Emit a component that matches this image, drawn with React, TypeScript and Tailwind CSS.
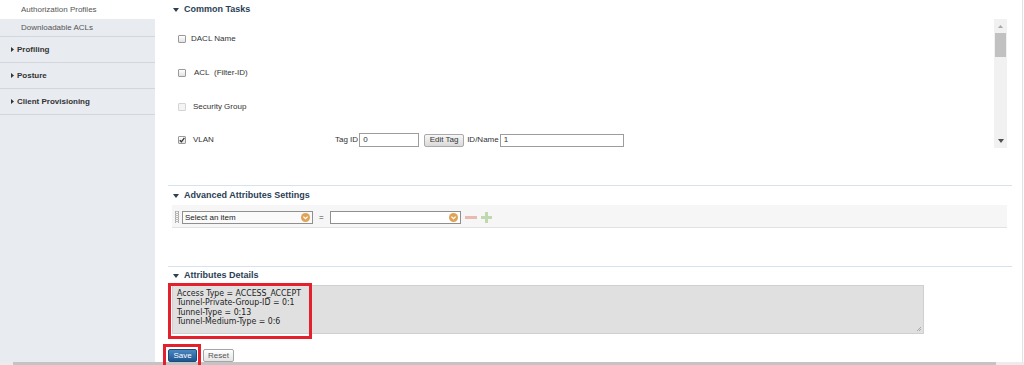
import React from "react";

const RightTri = () => (
  <svg width="3" height="5" viewBox="0 0 3 5" className="shrink-0">
    <path d="M0 0 L3 2.5 L0 5 Z" fill="#333" />
  </svg>
);

const DownTri = () => (
  <svg width="6" height="4" viewBox="0 0 6 4" className="shrink-0">
    <path d="M0 0 L6 0 L3 4 Z" fill="#2c3e50" />
  </svg>
);

const Checkbox = ({ checked = false, disabled = false }: { checked?: boolean; disabled?: boolean }) => (
  <div
    className={
      "w-[8px] h-[8px] shrink-0 rounded-[1px] border flex items-center justify-center " +
      (disabled
        ? "border-[#d4d4d4] bg-[#f4f4f4]"
        : "border-[#9a9a9a] bg-gradient-to-b from-[#ffffff] to-[#e2e2e2]")
    }
  >
    {checked && (
      <svg width="6" height="6" viewBox="0 0 6 6">
        <path d="M0.8 3.2 L2.4 4.8 L5.4 0.8" stroke="#333" strokeWidth="1.3" fill="none" />
      </svg>
    )}
  </div>
);

const OrangeChevron = () => (
  <svg width="9" height="9" viewBox="0 0 9 9" className="shrink-0">
    <circle cx="4.5" cy="4.5" r="4.5" fill="#e0a355" />
    <path d="M2.4 3.6 L4.5 5.6 L6.6 3.6" stroke="#fff" strokeWidth="1.3" fill="none" />
  </svg>
);

const Header = ({ title, h }: { title: string; h: string }) => (
  <div className={"flex items-center pl-[5px] gap-[5px] text-[9px] font-bold text-[#2b3e55] " + h}>
    <DownTri />
    <span>{title}</span>
  </div>
);

function Sidebar() {
  return (
    <div className="w-[155px] shrink-0 bg-[#e8ebf0] flex flex-col text-[8px]">
      <div className="h-[19px] bg-white flex items-center pl-[21px] text-[#555]">Authorization Profiles</div>
      <div className="h-[18px] flex items-center pl-[21px] text-[#555] border-b border-[#d3d7dd]">Downloadable ACLs</div>
      {["Profiling", "Posture", "Client Provisioning"].map((t) => (
        <div
          key={t}
          className="h-[26px] flex items-center pl-[11px] gap-[3px] font-bold text-[#333] border-b border-[#d3d7dd]"
        >
          <RightTri />
          <span>{t}</span>
        </div>
      ))}
    </div>
  );
}

function CommonTasks() {
  return (
    <div className="ml-[4px] w-[835px] h-[129px] flex overflow-hidden">
      <div className="flex-1 pt-[3px] text-[8px] text-[#333]">
        <div className="h-[34px] flex items-center pl-[6px]">
          <Checkbox />
          <span className="ml-[5px]">DACL Name</span>
        </div>
        <div className="h-[34px] flex items-center pl-[6px]">
          <Checkbox />
          <span className="ml-[8px]">ACL&nbsp;&nbsp;(Filter-ID)</span>
        </div>
        <div className="h-[34px] flex items-center pl-[6px]">
          <Checkbox disabled />
          <span className="ml-[7px]">Security Group</span>
        </div>
        <div className="h-[32px] flex items-center pl-[6px]">
          <Checkbox checked />
          <span className="ml-[7px] w-[142px]">VLAN</span>
          <span>Tag ID</span>
          <div className="ml-[1px] w-[60px] h-[14px] border border-[#9d9d9d] bg-white flex items-center pl-[3px]">0</div>
          <div className="ml-[5px] w-[40px] h-[13px] rounded-[2px] border border-[#a9a9a9] bg-gradient-to-b from-[#f7f7f7] to-[#d9d9d9] flex items-center justify-center text-[#333]">
            Edit Tag
          </div>
          <span className="ml-[3px]">ID/Name</span>
          <div className="ml-[1px] w-[124px] h-[13px] border border-[#9d9d9d] bg-white flex items-center pl-[3px]">1</div>
        </div>
      </div>
      <div className="w-[13px] h-[129px] bg-[#f1f1f1] flex flex-col items-center">
        <div className="h-[14px] flex items-center justify-center">
          <svg width="5" height="3" viewBox="0 0 5 3">
            <path d="M0 3 L5 3 L2.5 0 Z" fill="#a8a8a8" />
          </svg>
        </div>
        <div className="w-[11px] h-[24px] bg-[#c1c1c1]" />
        <div className="flex-1" />
        <div className="h-[14px] flex items-center justify-center">
          <svg width="6" height="4" viewBox="0 0 6 4">
            <path d="M0 0 L6 0 L3 4 Z" fill="#505050" />
          </svg>
        </div>
      </div>
    </div>
  );
}

function AdvancedRow() {
  return (
    <div className="ml-[4px] w-[835px] h-[23px] bg-[#f6f6f6] border-b border-[#e2e2e2] flex items-start pt-[6px] pl-[3px] text-[8px] text-[#222]">
      <div className="w-[4px] h-[12px] border-x border-dotted border-[#aaa] bg-[repeating-linear-gradient(to_bottom,#bbb_0px,#bbb_1px,transparent_1px,transparent_2px)]" />
      <div className="ml-[3px] w-[131px] h-[13px] border border-[#8f8f8f] bg-[#fafafa] flex items-center pl-[2px] pr-[2px] justify-between">
        <span>Select an item</span>
        <OrangeChevron />
      </div>
      <span className="ml-[6px] h-[13px] flex items-center text-[#444]">=</span>
      <div className="ml-[6px] w-[131px] h-[13px] border border-[#8f8f8f] bg-white flex items-center justify-end pr-[2px]">
        <OrangeChevron />
      </div>
      <div className="ml-[4px] mt-[5px] w-[12px] h-[2.5px] bg-[#e8bab2]" />
      <div className="ml-[4px] mt-[1px] w-[11px] h-[11px] relative">
        <div className="absolute left-0 top-[4px] w-[11px] h-[3px] bg-[#c0d8ae]" />
        <div className="absolute left-[4px] top-0 w-[3px] h-[11px] bg-[#c0d8ae]" />
      </div>
    </div>
  );
}

function Main() {
  return (
    <div className="flex-1 flex flex-col pl-[13px] border-r border-[#e2e2e2] mr-[1px]">
      <Header title="Common Tasks" h="h-[19px]" />
      <CommonTasks />
      <div className="mt-[37px] h-px w-[844px] bg-[#d6e3ee]" />
      <Header title="Advanced Attributes Settings" h="h-[19px]" />
      <AdvancedRow />
      <div className="mt-[38px] h-px w-[844px] bg-[#d6e3ee]" />
      <Header title="Attributes Details" h="h-[18px]" />
      <div className="ml-[4px] w-[752px] h-[49px] bg-[#e0e0e0] border border-[#d0d0d0] pl-[4px] pt-[3px] text-[8.7px] leading-[9.3px] text-[#222] relative font-['DejaVu_Sans_Condensed','Liberation_Sans',sans-serif]">
        <div>Access Type = ACCESS_ACCEPT</div>
        <div>Tunnel-Private-Group-ID = 0:1</div>
        <div>Tunnel-Type = 0:13</div>
        <div>Tunnel-Medium-Type = 0:6</div>
        <svg width="6" height="6" viewBox="0 0 6 6" className="absolute right-[1px] bottom-[1px]">
          <path d="M5 1 L1 5 M5 3 L3 5" stroke="#999" strokeWidth="0.8" />
        </svg>
      </div>
      <div className="mt-[15px] flex items-center gap-[6px] text-[8px]">
        <div className="w-[29px] h-[13px] rounded-[2px] border border-[#1d4a78] bg-gradient-to-b from-[#4a88c2] to-[#1f5590] text-white flex items-center justify-center">
          Save
        </div>
        <div className="w-[31px] h-[13px] rounded-[2px] border border-[#a6a6a6] bg-gradient-to-b from-[#ffffff] to-[#e3e3e3] text-[#555] flex items-center justify-center">
          Reset
        </div>
      </div>
    </div>
  );
}

export default function App() {
  return (
    <div className="w-[1024px] h-[365px] overflow-hidden bg-white flex flex-col relative font-['Liberation_Sans',Arial,sans-serif]">
      <div className="flex h-[362px]">
        <Sidebar />
        <Main />
      </div>
      <div className="h-[3px] flex">
        <div className="w-[13px] bg-[#ececec]" />
        <div className="w-[983px] bg-[#c4c4c4]" />
        <div className="flex-1 bg-[#ececec]" />
      </div>
      <div className="absolute left-[168px] top-[283px] w-[144px] h-[56px] border-[3px] border-[#e3202b]" />
      <div className="absolute left-[163px] top-[344px] w-[38px] h-[26px] border-[3px] border-[#e3202b]" />
    </div>
  );
}
